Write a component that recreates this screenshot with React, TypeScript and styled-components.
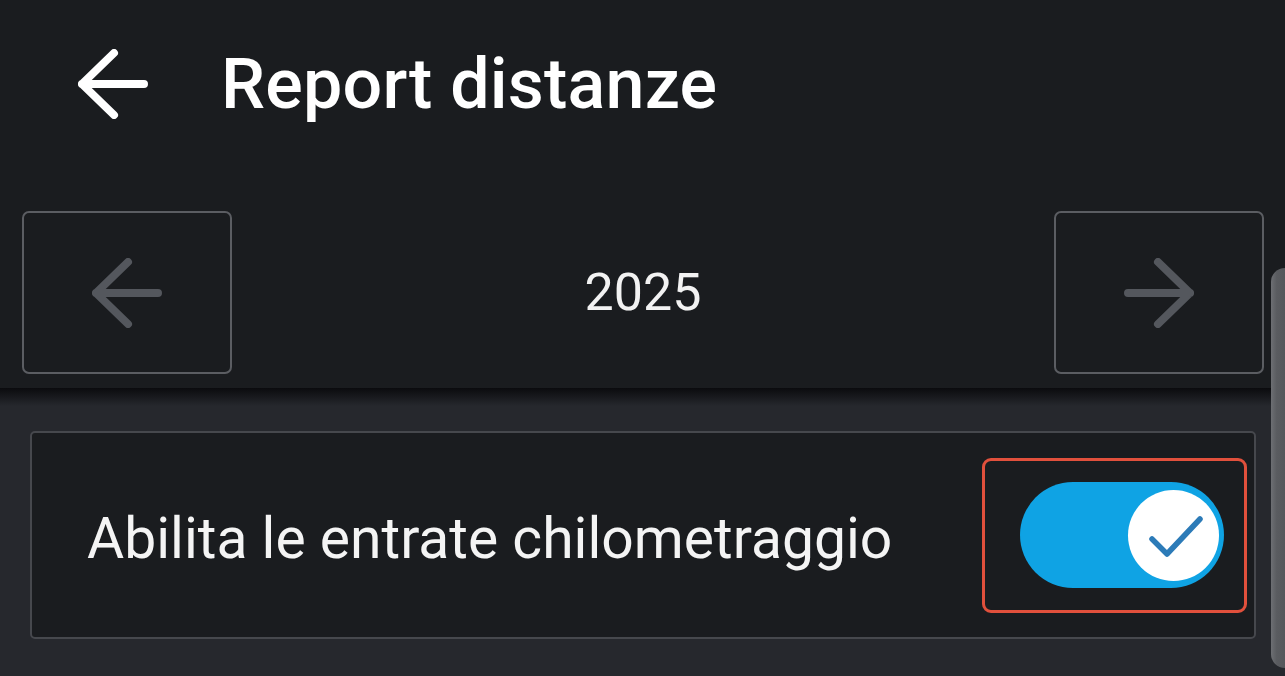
import React from "react";
import styled, { createGlobalStyle } from "styled-components";

const GlobalStyle = createGlobalStyle`
  html, body {
    margin: 0;
    padding: 0;
    background: #26282d;
    font-family: Roboto, "Noto Sans", "Liberation Sans", sans-serif;
  }
`;

const Page = styled.div`
  position: relative;
  width: 1285px;
  height: 676px;
  overflow: hidden;
  background: #26282d;
`;

const Header = styled.header`
  background: #1a1c1f;
  height: 388px;
  display: flex;
  flex-direction: column;
`;

const TopBar = styled.div`
  height: 168px;
  display: flex;
  align-items: center;
  padding-left: 78px;
  gap: 73px;
`;

const Title = styled.h1`
  margin: 0;
  color: #ffffff;
  font-size: 70px;
  font-weight: 500;
  letter-spacing: 0.2px;
`;

const NavRow = styled.div`
  margin-top: 43px;
  padding: 0 21px 0 22px;
  display: flex;
  align-items: center;
  justify-content: space-between;
`;

const NavButton = styled.button`
  width: 210px;
  height: 163px;
  box-sizing: border-box;
  border: 2px solid #5b5d62;
  border-radius: 7px;
  background: transparent;
  display: flex;
  align-items: center;
  justify-content: center;
  padding: 0;
`;

const Year = styled.span`
  color: #f2f2f2;
  font-size: 52px;
  font-weight: 400;
`;

const HeaderShadow = styled.div`
  height: 18px;
  background: linear-gradient(#0b0b0e 0%, #17181c 45%, #26282d 100%);
`;

const Content = styled.main`
  padding: 25px 29px 0 30px;
`;

const Card = styled.section`
  height: 208px;
  box-sizing: border-box;
  border: 2px solid #46484d;
  border-radius: 5px;
  background: #1a1c1f;
  display: flex;
  align-items: center;
  justify-content: space-between;
  padding: 0 7px 0 55px;
`;

const Label = styled.span`
  color: #f4f4f4;
  font-size: 57px;
  font-weight: 400;
  margin-top: 6px;
`;

const ToggleFrame = styled.div`
  width: 265px;
  height: 155px;
  box-sizing: border-box;
  border: 3px solid #e1503c;
  border-radius: 9px;
  display: flex;
  align-items: center;
  justify-content: center;
  padding-left: 15px;
`;

const Track = styled.div<{ $on: boolean }>`
  width: 204px;
  height: 106px;
  border-radius: 53px;
  background: ${(p) => (p.$on ? "#0fa3e4" : "#5b5d62")};
  display: flex;
  align-items: center;
  justify-content: ${(p) => (p.$on ? "flex-end" : "flex-start")};
  padding: 0 5px;
  box-sizing: border-box;
`;

const Thumb = styled.div`
  width: 91px;
  height: 91px;
  border-radius: 50%;
  background: #ffffff;
  display: flex;
`;

const ScrollThumb = styled.div`
  position: absolute;
  right: 0;
  top: 268px;
  width: 14px;
  height: 400px;
  border-radius: 14px 0 0 14px;
  background: linear-gradient(90deg, #6d6f73 0%, #5a5c60 40%, #55575b 100%);
`;

const Arrow = ({ dir, color }: { dir: "left" | "right"; color: string }) => (
  <svg
    width="70"
    height="70"
    viewBox="0 0 70 70"
    fill="none"
    stroke={color}
    strokeWidth="8"
    strokeLinecap="round"
    strokeLinejoin="round"
    style={dir === "right" ? { transform: "scaleX(-1)" } : undefined}
  >
    <path d="M36 4 L4 35 L36 66 M4 35 H66" />
  </svg>
);

export default function App() {
  const [on, setOn] = React.useState(true);
  return (
    <Page>
      <GlobalStyle />
      <Header>
        <TopBar>
          <Arrow dir="left" color="#ffffff" />
          <Title>Report distanze</Title>
        </TopBar>
        <NavRow>
          <NavButton>
            <Arrow dir="left" color="#54575d" />
          </NavButton>
          <Year>2025</Year>
          <NavButton>
            <Arrow dir="right" color="#54575d" />
          </NavButton>
        </NavRow>
      </Header>
      <HeaderShadow />
      <Content>
        <Card>
          <Label>Abilita le entrate chilometraggio</Label>
          <ToggleFrame onClick={() => setOn(!on)}>
            <Track $on={on}>
              <Thumb>
                <svg width="91" height="91" viewBox="0 0 91 91" fill="none">
                  <path
                    d="M24 49 L39 64 L72 29"
                    stroke="#2c7bb8"
                    strokeWidth="5.5"
                    strokeLinecap="round"
                    strokeLinejoin="round"
                  />
                </svg>
              </Thumb>
            </Track>
          </ToggleFrame>
        </Card>
      </Content>
      <ScrollThumb />
    </Page>
  );
}
